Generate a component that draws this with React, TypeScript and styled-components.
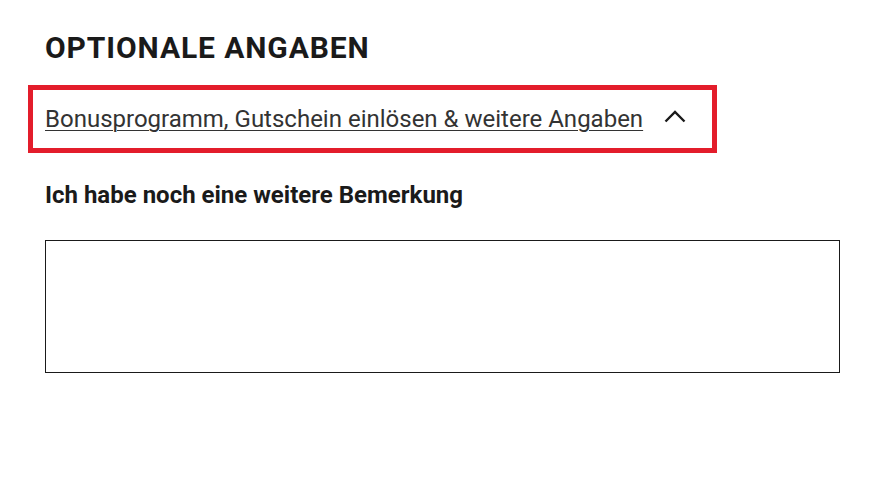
import styled, { createGlobalStyle } from "styled-components";

const GlobalStyle = createGlobalStyle`
  body {
    margin: 0;
    background: #ffffff;
    font-family: Roboto, "Liberation Sans", Arial, sans-serif;
    color: #1a1a1a;
  }
`;

const Page = styled.div`
  display: flex;
  flex-direction: column;
  align-items: flex-start;
  padding: 30px 0 0 45px;
`;

const Title = styled.h2`
  margin: 0;
  font-size: 30px;
  line-height: 36px;
  font-weight: 700;
  letter-spacing: 0.9px;
  text-transform: uppercase;
  color: #1a1a1a;
`;

const Toggle = styled.button`
  display: inline-flex;
  align-items: center;
  gap: 21px;
  margin: 19px 0 0 -17px;
  padding: 14px 26px 14px 12px;
  border: 5px solid #e31d2b;
  background: #ffffff;
  cursor: pointer;
  font-family: inherit;
`;

const ToggleText = styled.span`
  font-size: 24px;
  line-height: 30px;
  font-weight: 400;
  color: #333333;
  text-decoration: underline;
  text-decoration-thickness: 1px;
  text-underline-offset: 3px;
`;

const Chevron = styled.svg`
  display: block;
  width: 22px;
  height: 14px;
  margin-top: -6px;
`;

const Label = styled.label`
  margin-top: 28px;
  font-size: 24px;
  line-height: 28px;
  font-weight: 700;
  color: #1a1a1a;
`;

const Note = styled.textarea`
  display: block;
  box-sizing: border-box;
  width: 795px;
  height: 133px;
  margin-top: 31px;
  padding: 10px;
  border: 1px solid #1a1a1a;
  border-radius: 0;
  resize: none;
  font-family: inherit;
  font-size: 16px;
  outline: none;
`;

export default function App() {
  return (
    <>
      <GlobalStyle />
      <Page>
        <Title>Optionale Angaben</Title>
        <Toggle type="button" aria-expanded="true">
          <ToggleText>Bonusprogramm, Gutschein einlösen &amp; weitere Angaben</ToggleText>
          <Chevron viewBox="0 0 22 14" fill="none">
            <polyline
              points="1.5,12.5 11,3 20.5,12.5"
              stroke="#1a1a1a"
              strokeWidth="2.4"
              strokeLinecap="butt"
              strokeLinejoin="miter"
            />
          </Chevron>
        </Toggle>
        <Label htmlFor="note">Ich habe noch eine weitere Bemerkung</Label>
        <Note id="note" />
      </Page>
    </>
  );
}
